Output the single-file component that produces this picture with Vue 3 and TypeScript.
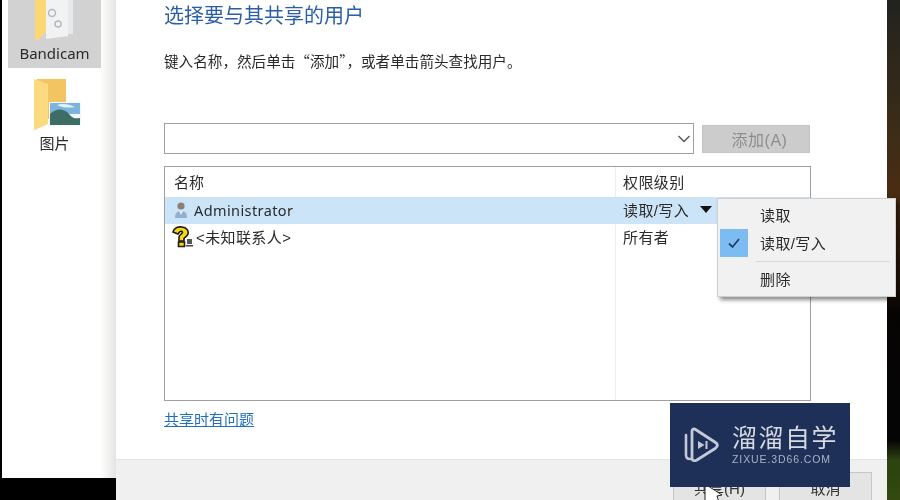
<script setup lang="ts">
type ShareRow = { name: string; level: string; selected: boolean; kind: 'user' | 'unknown' }

const rows: ShareRow[] = [
  { name: 'Administrator', level: '读取/写入', selected: true, kind: 'user' },
  { name: '<未知联系人>', level: '所有者', selected: false, kind: 'unknown' },
]
</script>

<template>
  <div class="screen">
    <aside class="desktop">
      <div class="desk-item is-selected">
        <svg class="bandicam-icon" width="42" height="42" viewBox="0 0 42 42">
          <path d="M1 0h11v32l-8 8H1z" fill="#fbd873" />
          <path d="M12 0h22v36l-22 3z" fill="#f1f2f4" />
          <path d="M34 0h5v34h-5z" fill="#e7e8ea" />
          <circle cx="18" cy="13" r="3.500" fill="none" stroke="#b5b9bd" stroke-width="1.500" />
          <circle cx="24" cy="24" r="3" fill="none" stroke="#b5b9bd" stroke-width="1.500" />
        </svg>
        <span class="desk-label">Bandicam</span>
      </div>
      <div class="desk-item">
        <svg class="pictures-icon" width="50" height="54" viewBox="0 0 50 54">
          <path d="M4 1h29v40H4z" fill="#f3c562" />
          <path d="M1 1l14 5v40l-13 6H1z" fill="#fcdb80" />
          <rect x="16" y="24" width="32" height="24" fill="#f4f6f8" />
          <rect x="17" y="25" width="30" height="11" fill="#7db4dd" />
          <path d="M17 36c6-6 14-6 19 0s8 4 11 4v7H17z" fill="#3d6e66" />
          <path d="M24 27c5-2 12-1 18 2-7 1-12 1-18-2z" fill="#e6f1f5" />
        </svg>
        <span class="desk-label">图片</span>
      </div>
    </aside>

    <main class="dialog">
      <div class="dialog-body">
        <h1 class="title">选择要与其共享的用户</h1>
        <p class="hint">键入名称，然后单击“添加”，或者单击箭头查找用户。</p>
        <div class="add-row">
          <div class="combo">
            <svg width="14" height="8" viewBox="0 0 14 8">
              <path d="M1.500 1l5.500 5.500L12.500 1" fill="none" stroke="#555" stroke-width="1.400" />
            </svg>
          </div>
          <button type="button" class="add-btn">添加(A)</button>
        </div>
        <div class="share-table">
          <div class="table-row header-row">
            <div class="cell name-cell">名称</div>
            <div class="cell level-cell">权限级别</div>
          </div>
          <div v-for="row in rows" :key="row.name" class="table-row" :class="{ 'is-selected': row.selected }">
            <div class="cell name-cell">
              <svg v-if="row.kind === 'user'" class="row-icon" width="14" height="18" viewBox="0 0 14 18">
                <circle cx="7" cy="5" r="3.600" fill="#8b7f78" />
                <path d="M1 17c0-5 2-7 6-7s6 2 6 7z" fill="#8fb1cf" />
                <path d="M5 10h4l-2 4z" fill="#e9eef2" />
              </svg>
              <svg v-else class="row-icon unknown" width="22" height="22" viewBox="0 0 22 22">
                <path d="M1 6c1-4 5-5.500 9-5s7 3 6 7c-.5 2-3 3-4 4.500V15H7v-4c0-2 3-3 3.500-4.500 0-1.500-2-1.500-3-.5L6 8z" fill="#f7d90f" stroke="#1a1a1a" stroke-width="1.600" />
                <path d="M6.500 16h6v4.500h-6z" fill="#f7d90f" stroke="#1a1a1a" stroke-width="1.600" />
                <path d="M15 13h5v5h-5z" fill="#555" />
                <path d="M14 19h7v1.500h-7z" fill="#444" />
              </svg>
              <span :class="row.kind === 'user' ? 'user-name' : 'contact-name'">{{ row.name }}</span>
            </div>
            <div class="cell level-cell">
              {{ row.level }}
              <i v-if="row.selected" class="caret"></i>
            </div>
          </div>
          <div class="table-fill">
            <div class="fill-name"></div>
            <div class="fill-level"></div>
          </div>
        </div>
        <a class="help-link">共享时有问题</a>
      </div>
      <footer class="dialog-footer">
        <button type="button" class="foot-btn">共享(H)</button>
        <button type="button" class="foot-btn">取消</button>
      </footer>
    </main>

    <div class="wallpaper"></div>

    <div class="level-menu">
      <div class="menu-item"><span class="menu-gutter"></span>读取</div>
      <div class="menu-item">
        <span class="menu-gutter is-checked">
          <svg width="14" height="12" viewBox="0 0 14 12">
            <path d="M2 6.500l3.500 3.500L12 2" fill="none" stroke="#1f3f66" stroke-width="1.800" />
          </svg>
        </span>
        读取/写入
      </div>
      <div class="menu-sep"></div>
      <div class="menu-item"><span class="menu-gutter"></span>删除</div>
    </div>

    <svg class="cursor" width="20" height="18" viewBox="0 0 20 18">
      <path d="M1 0v18h14L13 12l5-1z" fill="#fff" stroke="#222" stroke-width="1" />
    </svg>

    <div class="watermark">
      <svg class="wm-logo" width="36" height="38" viewBox="0 0 36 38">
        <path d="M2 9v20c0 2.500 1.500 4 4 4" fill="none" stroke="#c3c9d6" stroke-width="2.600" stroke-linecap="round" />
        <path d="M8 5c0-2 2-2.500 3.500-1.500l20 13c2.500 1.700 2.500 4 0 5.700l-19 12c-2 1-4.500.5-4.500-2z" fill="none" stroke="#c3c9d6" stroke-width="2.800" stroke-linejoin="round" />
        <path d="M14 15l6.500 4-6.500 4z" fill="#c3c9d6" />
        <rect x="21.500" y="15" width="2" height="8" fill="#c3c9d6" />
      </svg>
      <div class="wm-text">
        <div class="wm-name">溜溜自学</div>
        <div class="wm-url">ZIXUE.3D66.COM</div>
      </div>
    </div>
  </div>
</template>

<style scoped>
.screen {
  position: relative;
  display: flex;
  width: 900px;
  height: 500px;
  overflow: hidden;
  background: #000;
  font-family: "Liberation Sans", "Noto Sans CJK SC", sans-serif;
  color: #2a2a2a;
  filter: blur(0.35px);
}

.desktop {
  width: 114px;
  height: 478px;
  margin-left: 2px;
  background: linear-gradient(to right, #fff 86%, #e4e4e2 100%);
  flex-shrink: 0;
}

.desk-item {
  display: flex;
  flex-direction: column;
  align-items: center;
  width: 93px;
  margin-left: 6px;
  font-size: 15px;
}

.desk-item.is-selected {
  height: 68px;
  background: #d2d2d2;
}

.bandicam-icon {
  margin: 0 0 1px;
}

.pictures-icon {
  margin: 10px 0 1px 6px;
}

.desk-label {
  line-height: 20px;
  font-family: "Noto Sans", "Noto Sans CJK SC", sans-serif;
}

.dialog {
  flex: 1;
  display: flex;
  flex-direction: column;
  background: #fff;
}

.dialog-body {
  flex: 1;
  padding: 0 76px 0 48px;
}

.title {
  margin: 0;
  padding-top: 4px;
  font-size: 20px;
  font-weight: 400;
  line-height: 24px;
  color: #2a5ea6;
}

.hint {
  margin: 23px 0 0;
  font-family: "Noto Sans CJK SC", sans-serif;
  font-size: 14.600px;
  line-height: 20px;
  white-space: nowrap;
}

.add-row {
  display: flex;
  align-items: center;
  gap: 8px;
  margin-top: 52px;
}

.combo {
  display: flex;
  align-items: center;
  justify-content: flex-end;
  box-sizing: border-box;
  width: 530px;
  height: 31px;
  padding-right: 1px;
  border: 1.500px solid #a0a0a0;
  background: #fff;
}

.combo svg {
  margin-right: 1px;
}

.add-btn {
  width: 108px;
  height: 28px;
  padding: 0 0 0 7px;
  border: 1px solid #c4c4c4;
  background: #cccccc;
  color: #8d8d8d;
  font: inherit;
  font-size: 16px;
  letter-spacing: 0.500px;
}

.share-table {
  display: flex;
  flex-direction: column;
  box-sizing: border-box;
  width: 647px;
  height: 235px;
  margin-top: 12px;
  border: 1.500px solid #a0a0a0;
  font-size: 15px;
}

.table-row {
  display: flex;
  height: 27px;
}

.header-row {
  height: 30px;
}

.table-row.is-selected {
  background: #cce4f7;
}

.cell {
  display: flex;
  align-items: center;
  box-sizing: border-box;
  padding-bottom: 2px;
}

.name-cell {
  width: 450px;
  padding-left: 9px;
}

.level-cell {
  flex: 1;
  padding-left: 7px;
  border-left: 1px solid #e6eef6;
  white-space: nowrap;
  letter-spacing: 0.400px;
}

.is-selected .level-cell {
  border-left-color: transparent;
}

.row-icon {
  margin-right: 6px;
  flex-shrink: 0;
}

.row-icon.unknown {
  margin-left: -2px;
  margin-right: 2px;
}

.user-name {
  font-family: "Noto Sans", sans-serif;
  font-size: 14.500px;
  letter-spacing: 0.400px;
}

.contact-name {
  font-size: 15px;
  letter-spacing: 0.400px;
}

.caret {
  width: 0;
  height: 0;
  margin-left: 11px;
  border-left: 6px solid transparent;
  border-right: 6px solid transparent;
  border-top: 7px solid #111;
}

.table-fill {
  flex: 1;
  display: flex;
}

.fill-name {
  width: 450px;
}

.fill-level {
  flex: 1;
  border-left: 1px solid #e6eef6;
}

.help-link {
  display: inline-block;
  margin-top: 9px;
  font-size: 15px;
  line-height: 20px;
  color: #1f6fc0;
  text-decoration: underline;
}

.dialog-footer {
  display: flex;
  justify-content: flex-end;
  gap: 13px;
  box-sizing: border-box;
  height: 41px;
  padding: 12px 15px 0 0;
  border-top: 1px solid #e4e4e4;
  background: #f0f0f0;
}

.foot-btn {
  width: 93px;
  height: 30px;
  padding: 0;
  border: 1.500px solid #c6c6c6;
  background: #e4e4e4;
  color: #333;
  font: inherit;
  font-size: 15px;
}

.wallpaper {
  width: 13px;
  flex-shrink: 0;
  background: linear-gradient(to bottom, #22231f 0%, #3a2c18 25%, #4a2d12 38%, #1e1209 58%, #060403 62%, #050505 88%, #2c4210 92%, #33490f 100%);
}

.level-menu {
  position: absolute;
  left: 717px;
  top: 198px;
  box-sizing: border-box;
  width: 179px;
  height: 99px;
  padding: 2px;
  border: 1px solid #cfcfcf;
  background: #f1f1f1;
  box-shadow: 3px 3px 4px rgba(0, 0, 0, 0.45);
  font-size: 15px;
  letter-spacing: 0.400px;
}

.menu-item {
  display: flex;
  align-items: center;
  height: 28px;
  padding-bottom: 1px;
  box-sizing: border-box;
}

.menu-gutter {
  display: flex;
  align-items: center;
  justify-content: center;
  width: 28px;
  height: 28px;
  margin-right: 12px;
}

.menu-gutter.is-checked {
  background: #7dbcf2;
}

.menu-sep {
  height: 1px;
  margin: 4px 3px 3px 36px;
  background: #d8d8d8;
}

.cursor {
  position: absolute;
  left: 704px;
  top: 484px;
}

.watermark {
  position: absolute;
  left: 670px;
  top: 403px;
  display: flex;
  align-items: center;
  box-sizing: border-box;
  width: 180px;
  height: 84px;
  padding-left: 14px;
  background: #1e2f58;
  color: #d5d9e2;
}

.wm-logo {
  margin-right: 12px;
}

.wm-name {
  font-size: 25px;
  line-height: 29px;
  letter-spacing: 1.500px;
  white-space: nowrap;
}

.wm-url {
  margin-top: 0;
  font-size: 10.500px;
  line-height: 13px;
  letter-spacing: 0.900px;
  color: #a9b2c6;
  white-space: nowrap;
}
</style>
